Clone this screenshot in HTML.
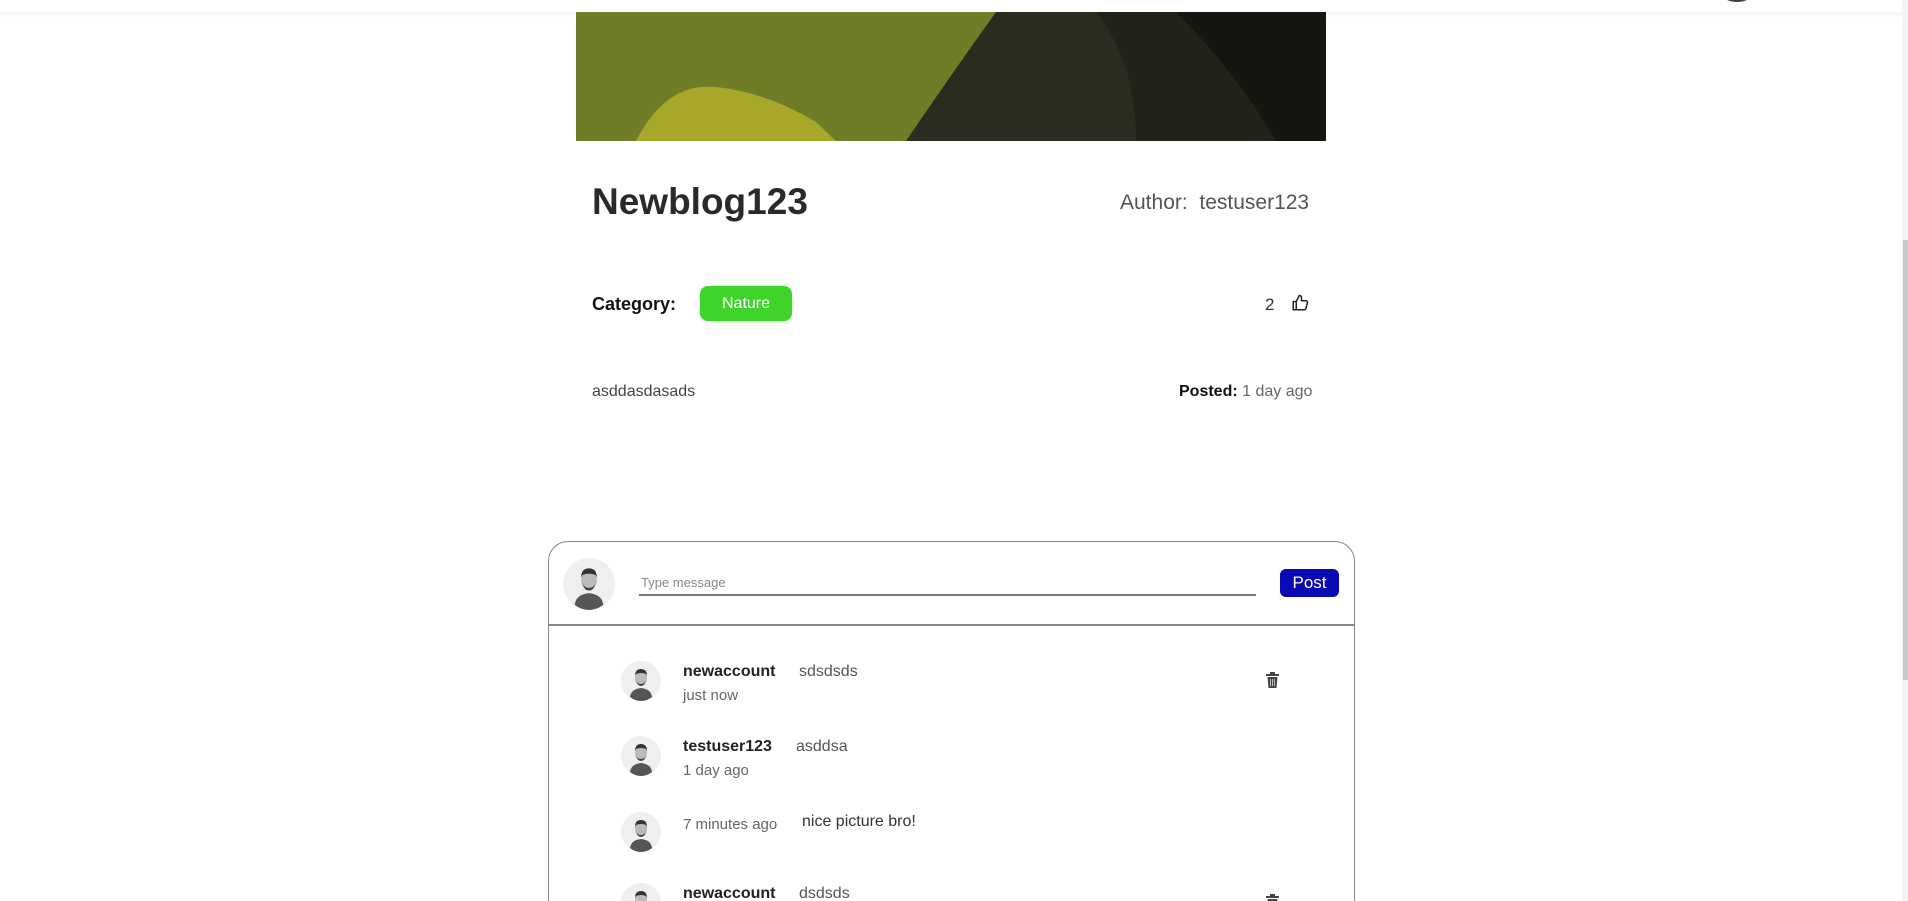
<!DOCTYPE html>
<html style="width:1908px;height:901px;overflow:hidden"><head><style>
*{margin:0;padding:0;box-sizing:border-box}
body{width:1908px;height:901px;overflow:hidden;background:#fff;font-family:"Liberation Sans",sans-serif;position:relative;color:#222}
.a{position:absolute;white-space:nowrap}
</style></head><body>
<svg width="0" height="0" style="position:absolute"><defs>
<symbol id="av" viewBox="0 0 40 40">
<circle cx="20" cy="20" r="20" fill="#efefef"/>
<path d="M9 36 Q10 28 20 27 Q30 28 31 36 Q26 40 20 40 Q14 40 9 36Z" fill="#555"/>
<ellipse cx="20" cy="17" rx="6" ry="7.5" fill="#bbb"/>
<path d="M14 15 Q14 8 20 8 Q26 8 26 15 L25 13 Q20 11 15 13Z" fill="#333"/>
<path d="M15 19 Q16 25 20 25 Q24 25 25 19 Q24 23 20 23 Q16 23 15 19Z" fill="#444"/>
</symbol>
<linearGradient id="g1" x1="0" x2="1" y1="0" y2="0"><stop offset="0" stop-color="#6b7a25"/><stop offset="0.4" stop-color="#7d8a2a"/><stop offset="0.5" stop-color="#3b3a22"/><stop offset="1" stop-color="#1d1c14"/></linearGradient>
</defs></svg>

<div class="a" style="left:0;top:0;width:1908px;height:12px;background:#fff;box-shadow:0 2px 6px rgba(0,0,0,0.06)"></div>
<div class="a" style="left:1722px;top:-14px;width:30px;height:16px;border-radius:50%;background:#444"></div>
<div class="a" style="left:1902px;top:0;width:6px;height:901px;background:#f4f4f4"></div>
<div class="a" style="left:1903px;top:240px;width:5px;height:440px;background:#c8c8c8"></div>

<svg class="a" style="left:576px;top:12px" width="750" height="129" viewBox="0 0 750 129">
<rect width="750" height="129" fill="url(#g1)"/>
<path d="M0 0 H420 Q380 60 330 129 H0Z" fill="#6f7d26"/>
<path d="M60 129 Q90 70 140 75 Q190 80 240 110 L260 129Z" fill="#a7a82a"/>
<path d="M330 129 Q370 70 420 0 H750 V129Z" fill="#2c2b20"/>
<path d="M520 0 Q560 50 560 129 H750 V0Z" fill="#22211a"/>
<path d="M600 0 Q660 60 700 129 H750 V0Z" fill="#161510"/>
</svg>

<div class="a" style="left:592px;top:181px;font-size:37px;font-weight:bold;color:#2a2a2a">Newblog123</div>
<div class="a" style="left:1120px;top:191px;font-size:21px;color:#555">Author:&nbsp; testuser123</div>

<div class="a" style="left:592px;top:294px;font-size:18px;font-weight:bold;color:#111">Category:</div>
<div class="a" style="left:700px;top:286px;width:92px;height:35px;border-radius:8px;background:#3ed42a;color:#fff;font-size:16px;text-align:center;line-height:35px;box-shadow:0 1px 3px rgba(0,0,0,0.15)">Nature</div>
<div class="a" style="left:1265px;top:295px;font-size:17px;color:#333">2</div>
<svg class="a" style="left:1291px;top:294px" width="18" height="18" viewBox="0 0 24 24" fill="none" stroke="#222" stroke-width="2" stroke-linejoin="round"><path d="M7 10v11H3V10zM7 10l4-8c2 0 3 1 3 3v4h6c1 0 2 1 2 2l-2 8c0 1-1 2-2 2H7"/></svg>

<div class="a" style="left:592px;top:383px;font-size:16px;color:#444">asddasdasads</div>
<div class="a" style="left:1179px;top:383px;font-size:16px;color:#666"><b style="color:#111">Posted:</b> 1 day ago</div>

<div class="a" style="left:548px;top:541px;width:807px;height:390px;border:1.5px solid #888;border-radius:20px;background:#fff"></div>
<div class="a" style="left:549px;top:624px;width:805px;height:1.5px;background:#888"></div>
<svg class="a" style="left:563px;top:558px" width="52" height="52"><use href="#av"/></svg>
<div class="a" style="left:641px;top:575px;font-size:13px;color:#888">Type message</div>
<div class="a" style="left:639px;top:594px;width:617px;height:1.5px;background:#777"></div>
<div class="a" style="left:1280px;top:569px;width:59px;height:28px;border-radius:6px;background:#0a0ab4;color:#fff;font-size:17px;text-align:center;line-height:28px">Post</div>

<svg class="a" style="left:621px;top:661px" width="40" height="40"><use href="#av"/></svg>
<div class="a" style="left:683px;top:663px;font-size:16px;font-weight:bold;color:#222">newaccount</div>
<div class="a" style="left:799px;top:663px;font-size:16px;color:#555">sdsdsds</div>
<div class="a" style="left:683px;top:687px;font-size:15px;color:#666">just now</div>
<svg class="a" style="left:1266px;top:672px" width="13" height="16" viewBox="0 0 13 16"><rect x="0" y="2" width="13" height="2" fill="#444"/><rect x="4" y="0" width="5" height="2" fill="#444"/><path d="M1.5 5h10l-1 11h-8z" fill="#444"/><path d="M4.5 7v7M6.5 7v7M8.5 7v7" stroke="#ddd" stroke-width="0.8"/></svg>

<svg class="a" style="left:621px;top:736px" width="40" height="40"><use href="#av"/></svg>
<div class="a" style="left:683px;top:738px;font-size:16px;font-weight:bold;color:#222">testuser123</div>
<div class="a" style="left:796px;top:738px;font-size:16px;color:#555">asddsa</div>
<div class="a" style="left:683px;top:762px;font-size:15px;color:#666">1 day ago</div>

<svg class="a" style="left:621px;top:812px" width="40" height="40"><use href="#av"/></svg>
<div class="a" style="left:683px;top:816px;font-size:15px;color:#666">7 minutes ago</div>
<div class="a" style="left:802px;top:813px;font-size:16px;color:#333">nice picture bro!</div>

<svg class="a" style="left:621px;top:883px" width="40" height="40"><use href="#av"/></svg>
<div class="a" style="left:683px;top:885px;font-size:16px;font-weight:bold;color:#222">newaccount</div>
<div class="a" style="left:799px;top:885px;font-size:16px;color:#555">dsdsds</div>
<svg class="a" style="left:1266px;top:894px" width="13" height="16" viewBox="0 0 13 16"><rect x="0" y="2" width="13" height="2" fill="#444"/><rect x="4" y="0" width="5" height="2" fill="#444"/><path d="M1.5 5h10l-1 11h-8z" fill="#444"/></svg>
</body></html>
